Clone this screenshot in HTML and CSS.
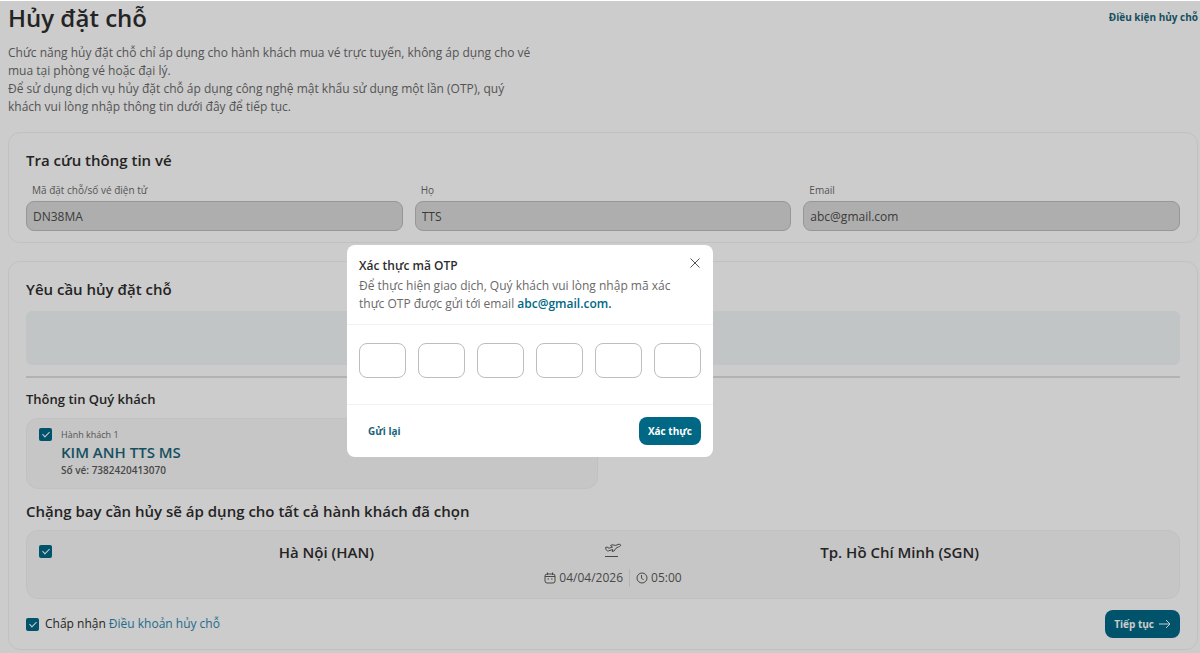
FILE: index.html
```html
<!DOCTYPE html>
<html lang="vi">
<head>
  <meta charset="UTF-8">
  <meta name="viewport" content="width=device-width, initial-scale=1.0">
  <title>Hủy đặt chỗ</title>
  <link rel="stylesheet" href="styles.css">
</head>
<body>
  <main class="page">
    <header class="page-header">
      <h1>Hủy đặt chỗ</h1>
      <a href="#" class="header-link">Điều kiện hủy chỗ</a>
    </header>

    <div class="intro">
      <p>Chức năng hủy đặt chỗ chỉ áp dụng cho hành khách mua vé trực tuyến, không áp dụng cho vé mua tại phòng vé hoặc đại lý.</p>
      <p>Để sử dụng dịch vụ hủy đặt chỗ áp dụng công nghệ mật khẩu sử dụng một lần (OTP), quý khách vui lòng nhập thông tin dưới đây để tiếp tục.</p>
    </div>

    <!-- Tra cứu vé -->
    <section class="card search-card">
      <h2>Tra cứu thông tin vé</h2>
      <div class="fields">
        <div class="field">
          <label for="code">Mã đặt chỗ/số vé điện tử</label>
          <input type="text" id="code" value="DN38MA" disabled>
        </div>
        <div class="field">
          <label for="lastName">Họ</label>
          <input type="text" id="lastName" value="TTS" disabled>
        </div>
        <div class="field">
          <label for="email">Email</label>
          <input type="text" id="email" value="abc@gmail.com" disabled>
        </div>
      </div>
    </section>

    <!-- Yêu cầu hủy -->
    <section class="card request-card">
      <h2>Yêu cầu hủy đặt chỗ</h2>
      <div class="notice"></div>
      <hr>

      <h3>Thông tin Quý khách</h3>
      <div class="panel passenger">
        <input type="checkbox" id="passenger1" checked>
        <label for="passenger1">
          <span class="passenger-no">Hành khách 1</span>
          <span class="passenger-name">KIM ANH TTS MS</span>
          <span class="ticket-no">Số vé: 7382420413070</span>
        </label>
      </div>

      <h2 class="flight-title">Chặng bay cần hủy sẽ áp dụng cho tất cả hành khách đã chọn</h2>
      <div class="panel flight">
        <input type="checkbox" id="flight1" aria-label="Hà Nội - Tp. Hồ Chí Minh" checked>
        <div class="route">
          <div class="city">Hà Nội (HAN)</div>
          <div class="flight-info">
            <svg class="plane" width="18" height="16" viewBox="0 0 18 16">
              <path d="M1.500 4.500 L3 4 L5 5.200 L8.500 4 L6.500 2.500 L8 1.800 L11.800 2.400 L14 1.500 C15.500 .9 17 1.400 16.600 2.500 C16.400 3.200 15.500 3.500 14.500 3.900 L12 5.200 L10 8 L8.300 8.500 L8.700 6.500 L4.500 7.900 C3.300 8.200 2.400 7.400 2.100 6.600 Z"/>
              <path d="M1 13.500 H14"/>
            </svg>
            <div class="time">
              <span class="time-item">
                <svg width="12" height="12" viewBox="0 0 12 12">
                  <rect x="1" y="2" width="10" height="9" rx="2"/>
                  <path d="M1 4.500 H11 M3.500 .5 V3 M8.500 .5 V3 M3.500 7 H5 M7 7 H8.500"/>
                </svg>
                04/04/2026
              </span>
              <span class="time-item">
                <svg width="12" height="12" viewBox="0 0 12 12">
                  <circle cx="6" cy="6" r="5"/>
                  <path d="M5.500 3 V6 L7.500 8"/>
                </svg>
                05:00
              </span>
            </div>
          </div>
          <div class="city">Tp. Hồ Chí Minh (SGN)</div>
        </div>
      </div>

      <div class="card-footer">
        <div class="accept">
          <input type="checkbox" id="accept" checked>
          <label for="accept">Chấp nhận</label>
          <a href="#">Điều khoản hủy chỗ</a>
        </div>
        <button type="button" class="btn">
          Tiếp tục
          <svg width="12" height="10" viewBox="0 0 12 10">
            <path d="M0 5 H11 M7 1 L11 5 L7 9"/>
          </svg>
        </button>
      </div>
    </section>
  </main>

  <!-- Modal OTP -->
  <div class="overlay">
    <form class="modal" role="dialog" aria-labelledby="otpTitle">
      <div class="modal-header">
        <div class="modal-title">
          <h4 id="otpTitle">Xác thực mã OTP</h4>
          <button type="button" class="close" aria-label="Đóng">
            <svg width="10" height="10" viewBox="0 0 10 10">
              <path d="M.5 .5 L9.500 9.500 M9.500 .5 L.5 9.500"/>
            </svg>
          </button>
        </div>
        <p>Để thực hiện giao dịch, Quý khách vui lòng nhập mã xác thực OTP được gửi tới email <b>abc@gmail.com.</b></p>
      </div>
      <div class="otp">
        <input type="text" maxlength="1" aria-label="Số 1">
        <input type="text" maxlength="1" aria-label="Số 2">
        <input type="text" maxlength="1" aria-label="Số 3">
        <input type="text" maxlength="1" aria-label="Số 4">
        <input type="text" maxlength="1" aria-label="Số 5">
        <input type="text" maxlength="1" aria-label="Số 6">
      </div>
      <div class="modal-footer">
        <button type="button" class="resend">Gửi lại</button>
        <button type="button" class="btn btn-confirm">Xác thực</button>
      </div>
    </form>
  </div>
</body>
</html>
```
FILE: styles.css
```css
* {
  box-sizing: border-box;
}

body {
  margin: 0;
  font-family: "Open Sans", "Noto Sans", sans-serif;
  font-size: 12px;
  line-height: 18px;
  color: #2d2d2d;
  background-color: #fff;
}

h1, h2, h3, h4, p {
  margin: 0;
}

a {
  text-decoration: none;
}

svg {
  fill: none;
  stroke: currentColor;
  flex-shrink: 0;
}

input, button {
  font-family: inherit;
}

.page {
  padding: 1px 2px 0 8px;
}

/* Tiêu đề trang */
.page-header {
  display: flex;
  justify-content: space-between;
}

h1 {
  font-size: 24px;
  line-height: 34px;
  font-weight: 600;
}

.header-link {
  font-size: 10px;
  line-height: 32px;
  font-weight: 700;
  color: #1b6478;
}

.intro {
  max-width: 530px;
  margin-top: 9px;
  color: #6a6a6a;
}

/* Khung nội dung */
.card {
  border: 1px solid #f2f2f2;
  border-radius: 12px;
  padding: 16px 17px 11px;
}

.search-card {
  margin-top: 16px;
}

.request-card {
  margin-top: 18px;
}

h2 {
  font-size: 15px;
  line-height: 22px;
  font-weight: 600;
}

h3 {
  font-size: 13px;
  line-height: 18px;
  font-weight: 600;
}

.fields {
  display: flex;
  gap: 12px;
  margin-top: 10px;
}

.field {
  flex: 1;
}

.field label {
  display: block;
  padding-left: 6px;
  font-size: 10px;
  line-height: 18px;
  color: #6a6a6a;
}

.field input {
  display: block;
  width: 100%;
  height: 30px;
  margin-top: 2px;
  padding: 0 6px;
  border: 1px solid #bdbdbd;
  border-radius: 8px;
  background-color: #dadada;
  font-size: 12px;
  color: #4a4a4a;
}

.notice {
  height: 54px;
  margin-top: 11px;
  border-radius: 6px;
  background-color: #f2f7f8;
}

hr {
  margin: 11px 0 12px;
  border: none;
  border-top: 2px solid #dfdfdf;
}

.panel {
  display: flex;
  border: 1px solid #f2f2f2;
  border-radius: 12px;
  background-color: #f8f8f8;
}

input[type="checkbox"] {
  appearance: none;
  flex-shrink: 0;
  display: grid;
  place-items: center;
  width: 13px;
  height: 13px;
  margin: 0;
  border-radius: 2px;
  background-color: #006885;
}

/* dấu tích */
input[type="checkbox"]:checked::before {
  content: "";
  width: 3px;
  height: 6px;
  margin-bottom: 2px;
  border: solid #fff;
  border-width: 0 1px 1px 0;
  transform: rotate(45deg);
}

/* Hành khách */
.passenger {
  width: calc(50% - 5px);
  margin-top: 10px;
  padding: 9px 12px 10px;
  gap: 9px;
}

.passenger label {
  display: flex;
  flex-direction: column;
}

.passenger-no {
  font-size: 9px;
  line-height: 14px;
  color: #6a6a6a;
}

.passenger-name {
  font-size: 15px;
  line-height: 20px;
  font-weight: 600;
  color: #1b6478;
}

.ticket-no {
  font-size: 10px;
  line-height: 16px;
  font-weight: 600;
  color: #5a5a5a;
}

/* Chặng bay */
.flight-title {
  margin-top: 11px;
}

.flight {
  margin-top: 8px;
  padding: 12px 12px 11px;
  gap: 7px;
}

.flight input {
  margin-top: 2px;
}

.route {
  flex: 1;
  display: grid;
  grid-template-columns: repeat(3, 1fr);
  padding: 0 11%;
  text-align: center;
}

.city {
  font-size: 15px;
  line-height: 18px;
  font-weight: 600;
}

.flight-info {
  display: flex;
  flex-direction: column;
  align-items: center;
  gap: 10px;
  color: #5a5a5a;
}

.time {
  display: flex;
}

.time-item {
  display: flex;
  align-items: center;
  gap: 3px;
}

.time-item + .time-item {
  margin-left: 6px;
  padding-left: 6px;
  border-left: 1px solid #e3e3e3;
}

.card-footer {
  display: flex;
  justify-content: space-between;
  align-items: center;
  margin-top: 11px;
}

.accept {
  display: flex;
  align-items: center;
}

.accept label {
  margin: 0 3px 0 6px;
}

.accept a {
  color: #2d86ae;
}

.btn {
  display: flex;
  align-items: center;
  gap: 5px;
  height: 28px;
  padding: 0 9px;
  border: none;
  border-radius: 8px;
  background-color: #006885;
  font-size: 10px;
  font-weight: 700;
  color: #fff;
  cursor: pointer;
}

/* Modal */
.overlay {
  position: fixed;
  inset: 1px 0 0;
  display: flex;
  justify-content: center;
  align-items: flex-start;
  padding: 244px 140px 0 0;
  background-color: rgba(0, 0, 0, 0.2);
}

.modal {
  width: 366px;
  border-radius: 8px;
  background-color: #fff;
}

.modal-header {
  padding: 12px 12px 11px;
}

.modal-title {
  display: flex;
  justify-content: space-between;
}

h4 {
  font-size: 12px;
  line-height: 18px;
  font-weight: 600;
}

.modal-header p {
  max-width: 320px;
  margin-top: 2px;
  color: #6a6a6a;
}

.modal-header b {
  font-weight: 600;
  color: #006885;
}

.close {
  display: flex;
  margin: 1px 1px 0 0;
  height: 10px;
  padding: 0;
  border: none;
  background: none;
  color: #555;
  cursor: pointer;
}

.otp {
  display: flex;
  gap: 12px;
  padding: 18px 12px 26px;
  border: solid #f2f2f2;
  border-width: 1px 0;
}

.otp input {
  flex: 1;
  min-width: 0;
  height: 35px;
  border: 1px solid #bdbdbd;
  border-radius: 8px;
  font-size: 14px;
  text-align: center;
}

.modal-footer {
  display: flex;
  justify-content: space-between;
  padding: 12px;
}

.resend {
  padding: 0 9px;
  border: none;
  background: none;
  font-size: 10px;
  font-weight: 700;
  color: #1b6478;
  cursor: pointer;
}
```
